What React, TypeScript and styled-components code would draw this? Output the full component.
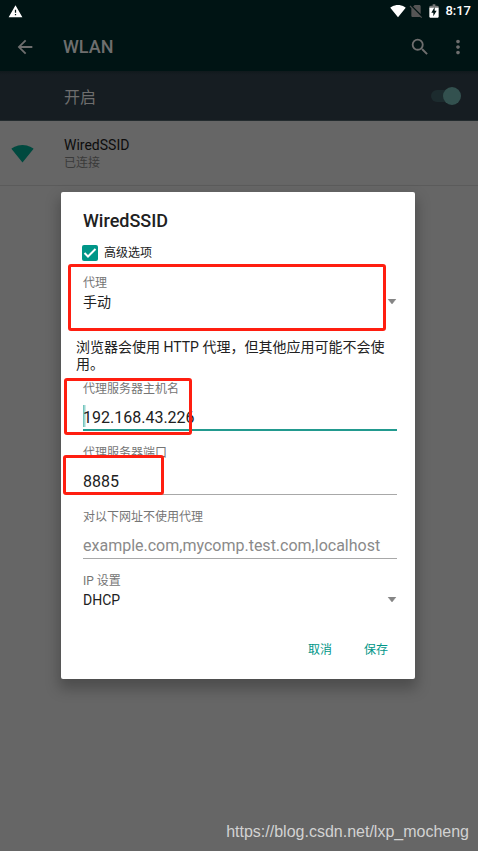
import React from 'react';
import styled, { createGlobalStyle, css } from 'styled-components';

const GlobalStyle = createGlobalStyle`
  * { box-sizing: border-box; }
  body { margin: 0; background: #666; font-family: Roboto, 'Noto Sans CJK SC', sans-serif; }
  button, input, select { font: inherit; margin: 0; }
`;

const Screen = styled.div`
  position: relative;
  min-height: 100vh;
  background: #666;
`;

const StatusBar = styled.div`
  display: flex;
  align-items: center;
  justify-content: space-between;
  height: 22px;
  padding: 0 7px 0 8px;
  background: #001414;
  color: #fff;
`;

const StatusGroup = styled.div`
  display: flex;
  align-items: center;
  gap: 2px;
`;

const DimIcon = styled.span`
  display: flex;
  color: #555;
`;

const Clock = styled.span`
  margin-left: 1px;
  font-size: 13px;
  line-height: 22px;
  font-weight: 500;
`;

const AppBar = styled.header`
  display: flex;
  align-items: center;
  height: 49px;
  padding: 0 9px 0 14px;
  background: #001414;
  color: #6e6e6e;
`;

const PageTitle = styled.h1`
  flex: 1;
  margin: 0 0 0 27px;
  font-size: 18px;
  line-height: 24px;
  font-weight: 500;
`;

const IconButton = styled.button`
  display: flex;
  padding: 0;
  border: 0;
  background: none;
  color: inherit;
  & + & { margin-left: 16px; }
`;

const SwitchBar = styled.label`
  display: flex;
  align-items: center;
  justify-content: space-between;
  height: 50px;
  padding: 0 17px 0 64px;
  background: linear-gradient(#10191c, #161d22 4px);
  border-bottom: 1px solid #232b2e;
  color: #6e6e6e;
  font-size: 16px;
`;

const Switch = styled.input`
  appearance: none;
  display: grid;
  align-items: center;
  width: 30px;
  height: 18px;
  &::before, &::after {
    content: '';
    grid-area: 1 / 1;
  }
  &::before {
    width: 26px;
    height: 12px;
    border-radius: 6px;
    background: #1c2b2e;
  }
  &::after {
    justify-self: end;
    width: 18px;
    height: 18px;
    border-radius: 50%;
    background: #33514f;
  }
`;

const NetworkRow = styled.div`
  display: flex;
  align-items: center;
  gap: 30px;
  height: 65px;
  padding-left: 11px;
  border-bottom: 1px solid #5b5b5b;
  color: #00493f;
`;

const NetworkText = styled.div`
  padding-top: 2px;
`;

const NetworkName = styled.div`
  color: #0c0c0c;
  font-size: 14px;
  line-height: 18px;
`;

const NetworkState = styled.div`
  color: #3a3a3a;
  font-size: 12px;
  line-height: 18px;
`;

const Overlay = styled.div`
  position: absolute;
  inset: 0;
  display: flex;
  align-items: center;
  justify-content: center;
  padding: 20px 63px 0 61px;
`;

const Dialog = styled.form`
  flex: 1;
  max-width: 560px;
  padding: 18px 18px 13px 22px;
  border-radius: 2px;
  background: #fff;
  box-shadow: 0 8px 14px 2px rgba(0, 0, 0, 0.25);
  color: #212121;
`;

const DialogTitle = styled.h2`
  margin: 0 0 13px;
  font-size: 18px;
  line-height: 22px;
  font-weight: 500;
`;

const CheckRow = styled.label`
  display: flex;
  align-items: center;
  gap: 6px;
  height: 16px;
  margin-left: -1px;
  font-size: 12px;
  line-height: 16px;
`;

const CheckWrap = styled.span`
  display: grid;
  svg { grid-area: 1 / 1; pointer-events: none; }
`;

const CheckBox = styled.input`
  grid-area: 1 / 1;
  appearance: none;
  width: 16px;
  height: 16px;
  border-radius: 2px;
  background: #009688;
`;

const Field = styled.div`
  position: relative;
  margin-top: 14px;
`;

const FieldLabel = styled.label`
  display: block;
  color: #757575;
  font-size: 12px;
  line-height: 16px;
`;

const SelectWrap = styled.div`
  display: grid;
  align-items: center;
  svg { grid-area: 1 / 1; justify-self: end; pointer-events: none; }
`;

const Select = styled.select`
  grid-area: 1 / 1;
  appearance: none;
  width: 100%;
  height: 22px;
  padding: 0;
  border: 0;
  background: none;
  color: #212121;
  font-size: 14px;
`;

const Hint = styled.p`
  margin: 26px 0 -6px -7px;
  font-size: 14px;
  line-height: 17px;
`;

const TextInput = styled.input<{ $active?: boolean }>`
  display: block;
  width: 100%;
  height: 34px;
  padding: 8px 0 0;
  border: 0;
  border-bottom: 1px solid #a8a8a8;
  border-radius: 0;
  outline: 0;
  background: none;
  color: #212121;
  font-size: 16px;
  &::placeholder { color: #8a8a8a; opacity: 1; }
  ${(p) => p.$active && css`
    border-bottom: 2px solid #229a8f;
    background: linear-gradient(90deg, #5dbcb3, #e0f2f0) 0 8px / 3px 22px no-repeat;
  `}
`;

const Highlight = styled.div<{ $top: number; $bottom: number; $left: number; $width?: number }>`
  position: absolute;
  top: ${(p) => p.$top}px;
  bottom: ${(p) => p.$bottom}px;
  left: ${(p) => p.$left}px;
  ${(p) => (p.$width ? `width: ${p.$width}px;` : 'right: 11px;')}
  border: 3px solid #ff1e10;
  border-radius: 3px;
  pointer-events: none;
`;

const Actions = styled.div`
  display: flex;
  justify-content: flex-end;
  gap: 16px;
  margin: 19px 1px 0 0;
`;

const ActionButton = styled.button`
  height: 36px;
  padding: 0 8px;
  border: 0;
  background: none;
  color: #009688;
  font-size: 12px;
`;

const Watermark = styled.a`
  position: absolute;
  right: 9px;
  bottom: 8px;
  color: #d2d2d2;
  font-family: 'Liberation Sans', sans-serif;
  font-size: 16px;
  line-height: 22px;
  text-decoration: none;
`;

const Icon = ({ d, size = 22 }: { d: string; size?: number }) => (
  <svg width={size} height={size} viewBox="0 0 24 24" fill="currentColor" aria-hidden="true">
    <path d={d} />
  </svg>
);

const wifi = 'M12 21.5 23.6 7C23.2 6.7 18.7 3 12 3S.8 6.7.4 7z';
const back = 'M20 11H7.83l5.59-5.59L12 4l-8 8 8 8 1.41-1.41L7.83 13H20z';
const search = 'M15.5 14h-.79l-.28-.27A6.47 6.47 0 0 0 16 9.5 6.5 6.5 0 1 0 9.5 16c1.61 0 3.09-.59 4.23-1.57l.27.28v.79l5 4.99L20.49 19zm-6 0a4.5 4.5 0 1 1 0-9 4.5 4.5 0 0 1 0 9z';
const more = 'M12 8c1.1 0 2-.9 2-2s-.9-2-2-2-2 .9-2 2 .9 2 2 2zm0 2c-1.1 0-2 .9-2 2s.9 2 2 2 2-.9 2-2-.9-2-2-2zm0 6c-1.1 0-2 .9-2 2s.9 2 2 2 2-.9 2-2-.9-2-2-2z';
const warning = 'M1 21h22L12 2zm12-3h-2v-2h2zm0-4h-2V9h2z';
const noSim = 'M18.99 5c0-1.1-.89-2-1.99-2h-7L7.66 5.34 19 16.68zM3.65 3.88 2.38 5.15 5 7.77V19c0 1.1.9 2 2 2h10.01c.35 0 .67-.1.96-.26l1.88 1.88 1.27-1.27z';

const BatteryIcon = () => (
  <svg width="16" height="16" viewBox="0 0 24 24" aria-hidden="true">
    <path fill="#777" d="M15.7 4H14V2h-4v2H8.3C7.6 4 5 4.6 5 5.3V8h14V5.3C19 4.6 16.4 4 15.7 4z" />
    <path fill="#fff" d="M5 7v13.7C5 21.4 5.6 22 6.3 22h11.4c.7 0 1.3-.6 1.3-1.3V7z" />
    <path fill="#001414" d="M11 20v-5.500H8L13 6v5.500h3z" />
  </svg>
);

const Arrow = () => (
  <svg width="10" height="6" viewBox="0 0 10 6" aria-hidden="true">
    <path d="M1 0h8L5 5z" fill="#858585" stroke="#858585" strokeWidth="0.5" />
  </svg>
);

export default function App() {
  return (
    <Screen>
      <GlobalStyle />
      <StatusBar>
        <Icon d={warning} size={15} />
        <StatusGroup>
          <Icon d={wifi} size={16} />
          <DimIcon><Icon d={noSim} size={16} /></DimIcon>
          <BatteryIcon />
          <Clock>8:17</Clock>
        </StatusGroup>
      </StatusBar>
      <AppBar>
        <IconButton aria-label="返回"><Icon d={back} /></IconButton>
        <PageTitle>WLAN</PageTitle>
        <IconButton aria-label="搜索"><Icon d={search} /></IconButton>
        <IconButton aria-label="更多"><Icon d={more} /></IconButton>
      </AppBar>
      <SwitchBar>
        开启
        <Switch type="checkbox" role="switch" defaultChecked />
      </SwitchBar>
      <NetworkRow>
        <Icon d={wifi} size={23} />
        <NetworkText>
          <NetworkName>WiredSSID</NetworkName>
          <NetworkState>已连接</NetworkState>
        </NetworkText>
      </NetworkRow>

      <Overlay>
        <Dialog role="dialog" aria-labelledby="dialog-title" onSubmit={(e) => e.preventDefault()}>
          <DialogTitle id="dialog-title">WiredSSID</DialogTitle>
          <CheckRow>
            <CheckWrap>
              <CheckBox type="checkbox" defaultChecked />
              <svg width="16" height="16" viewBox="0 0 16 16" fill="none" stroke="#fff" strokeWidth="2" aria-hidden="true">
                <path d="M2.500 8l3.500 3.500 7.500-7.500" />
              </svg>
            </CheckWrap>
            高级选项
          </CheckRow>
          <Field>
            <FieldLabel htmlFor="proxy">代理</FieldLabel>
            <SelectWrap>
              <Select id="proxy" defaultValue="手动">
                <option>手动</option>
              </Select>
              <Arrow />
            </SelectWrap>
            <Highlight $top={-11} $bottom={-18} $left={-15} />
          </Field>
          <Hint>浏览器会使用 HTTP 代理，但其他应用可能不会使用。</Hint>
          <Field>
            <FieldLabel htmlFor="host">代理服务器主机名</FieldLabel>
            <TextInput id="host" $active defaultValue="192.168.43.226" />
            <Highlight $top={-3} $bottom={-4} $left={-19} $width={128} />
          </Field>
          <Field>
            <FieldLabel htmlFor="port">代理服务器端口</FieldLabel>
            <TextInput id="port" defaultValue="8885" />
            <Highlight $top={10} $bottom={0} $left={-20} $width={101} />
          </Field>
          <Field>
            <FieldLabel htmlFor="bypass">对以下网址不使用代理</FieldLabel>
            <TextInput id="bypass" placeholder="example.com,mycomp.test.com,localhost" />
          </Field>
          <Field>
            <FieldLabel htmlFor="ip">IP 设置</FieldLabel>
            <SelectWrap>
              <Select id="ip" defaultValue="DHCP">
                <option>DHCP</option>
              </Select>
              <Arrow />
            </SelectWrap>
          </Field>
          <Actions>
            <ActionButton type="button">取消</ActionButton>
            <ActionButton type="submit">保存</ActionButton>
          </Actions>
        </Dialog>
      </Overlay>
      <Watermark href="https://blog.csdn.net/lxp_mocheng">https://blog.csdn.net/lxp_mocheng</Watermark>
    </Screen>
  );
}
